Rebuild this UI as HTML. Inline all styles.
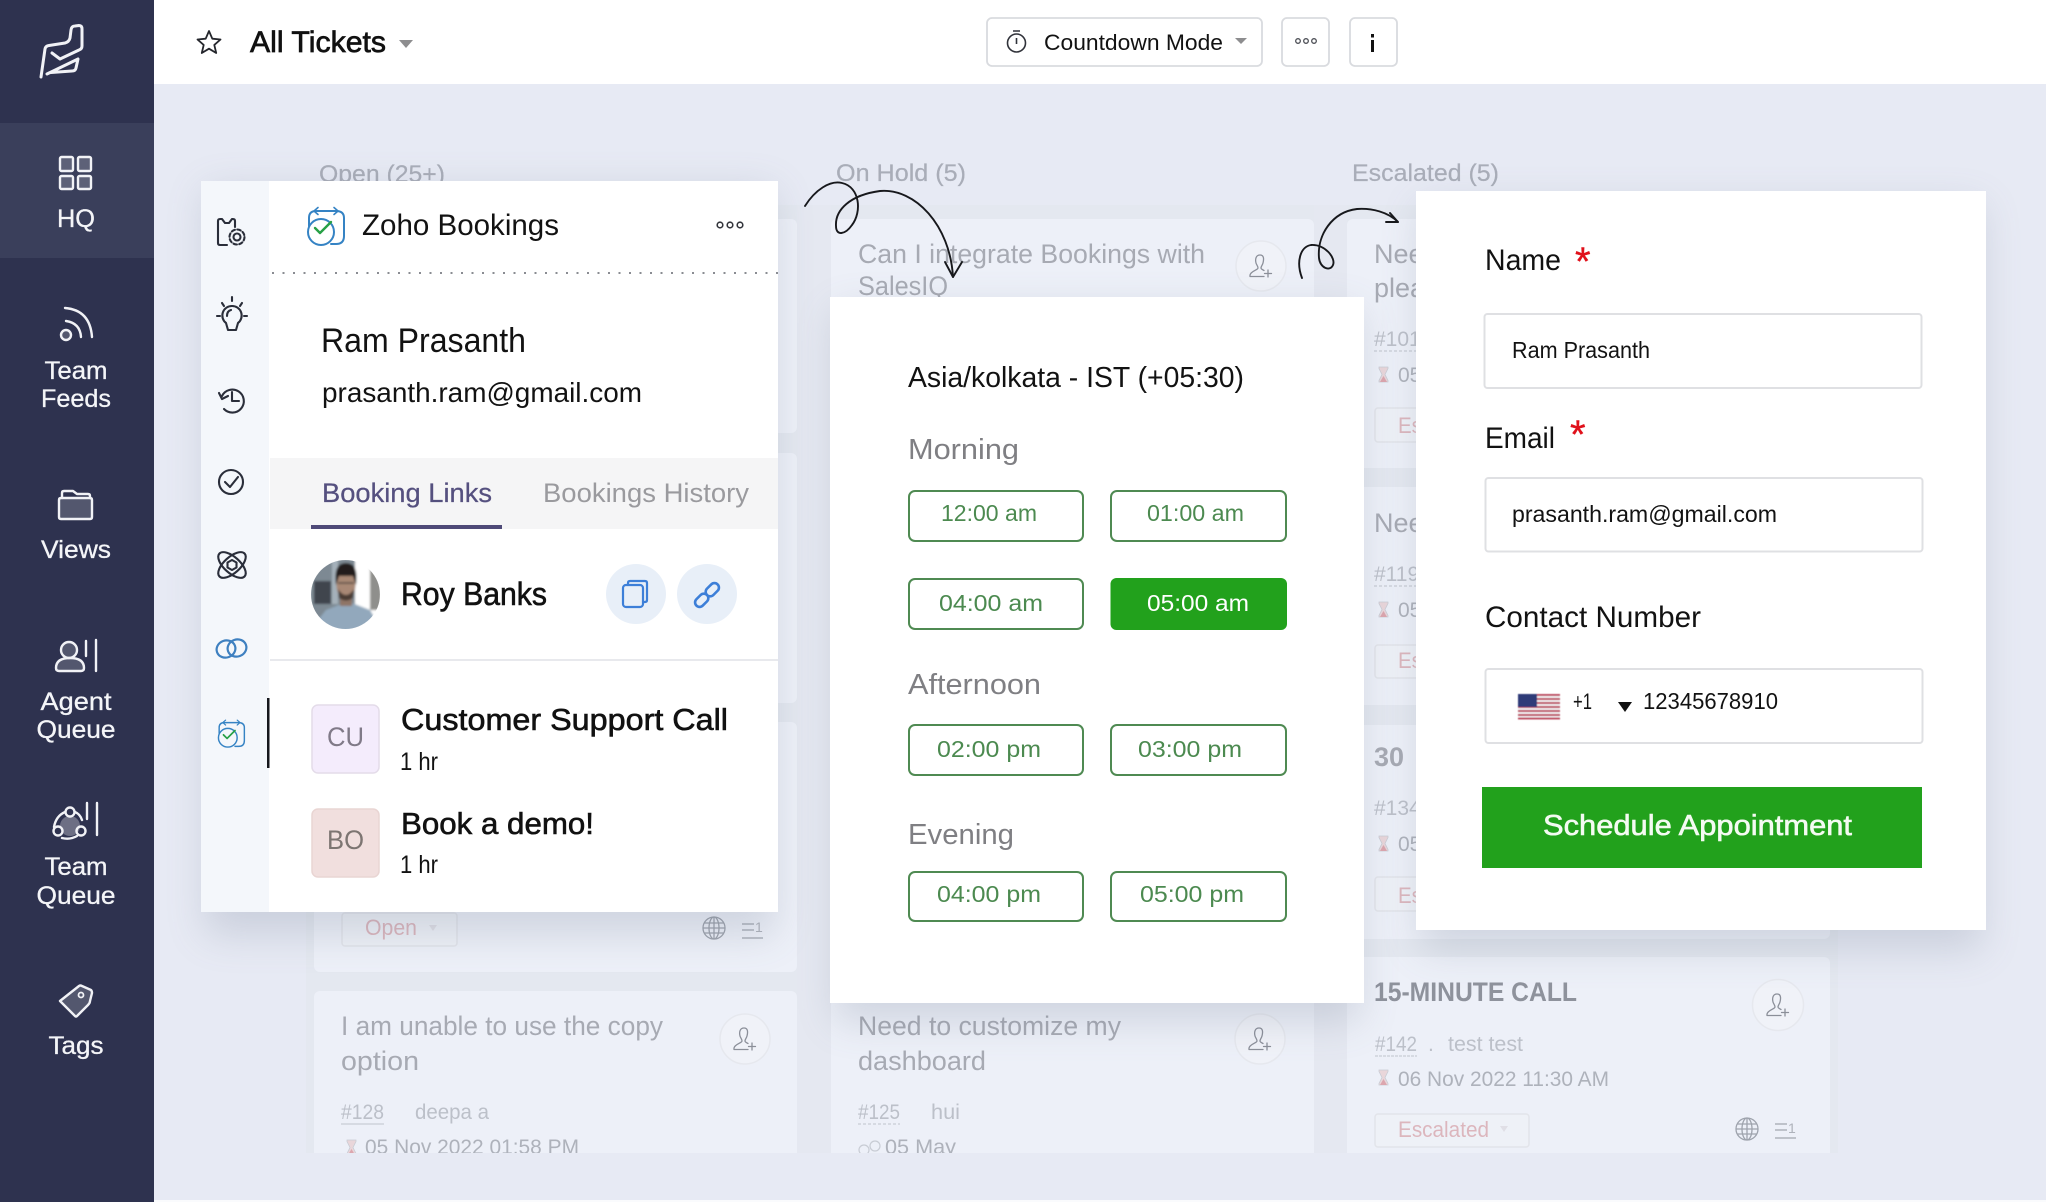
<!DOCTYPE html>
<html lang="en"><head><meta charset="utf-8"><title>All Tickets</title>
<style>
html,body{margin:0;padding:0;background:#e7eaf4;width:2046px;height:1202px;overflow:hidden}
svg{display:block}
text{font-family:"Liberation Sans",sans-serif;white-space:pre}
.side{fill:#f4f5f8;stroke:#f4f5f8;stroke-width:.3;font-size:25px;text-anchor:middle}
.si{fill:rgba(255,255,255,.18);stroke:#f1f2f6;stroke-width:2.4;stroke-linecap:round;stroke-linejoin:round}
.sl{fill:none;stroke:#f1f2f6;stroke-width:2.4;stroke-linecap:round;stroke-linejoin:round}
.ri{fill:none;stroke:#2a2e3a;stroke-width:2.1;stroke-linecap:round;stroke-linejoin:round}
.t{fill:#a7aab3;font-size:27px}
.m{fill:#bcc0c9;font-size:21px}
.m2{fill:#aeb2bb;font-size:21px}
.r{fill:#dcb6bd;font-size:22px}
.tag{fill:#eef1f7;stroke:#e2e4ea;stroke-width:1.5}
.card{fill:#edf0f8}
.lab{fill:#a9adb8;font-size:24px;stroke:#a9adb8;stroke-width:.2}
.b{fill:#111;stroke:#111;stroke-width:.6}
.k{fill:#121212}
.g{fill:#4c8a50;font-size:23px}
.slot{fill:#fff;stroke:#4f8a52;stroke-width:2}
.inp{fill:#fff;stroke:#dfe0e3;stroke-width:2}
.ic{fill:none;stroke:#3d7fd8;stroke-width:2.2;stroke-linecap:round;stroke-linejoin:round}
.hg{fill:none;stroke:#c8ccd4;stroke-width:1.2}
</style></head>
<body>
<svg xmlns="http://www.w3.org/2000/svg" width="2046" height="1202" viewBox="0 0 2046 1202">
<defs>
<clipPath id="cl"><rect x="154" y="85" width="1892" height="1068"/></clipPath>
<clipPath id="av"><circle cx="345.500" cy="594.500" r="34.500"/></clipPath>
<filter id="sh" x="-20%" y="-20%" width="140%" height="140%"><feGaussianBlur stdDeviation="20"/></filter>
<filter id="sf"><feGaussianBlur stdDeviation="1"/></filter>
<filter id="sf2"><feGaussianBlur stdDeviation=".4"/></filter>
<g id="pp"><path d="M-1 -11C-5 -11 -6 -7 -5 -3C-4.500 -1 -3 0 -3 2C-3 4 -10 5 -11 9L-11 10.500L3 10.500M-1 -11C3 -11 3 -7 2 -3C1.500 -1 0 .5 0 2C0 3 2 4 3 4.500M7 4V11M3.500 7.500H10.500" fill="none" stroke="#8b8f99" stroke-width="1.300" stroke-linecap="round" stroke-linejoin="round"/></g>
<g id="globe" fill="none" stroke="#9ea3ad" stroke-width="1.300"><circle r="11"/><ellipse rx="5" ry="11"/><path d="M0 -11V11M-10 -5H10M-11 0H11M-10 5H10"/></g>
<g id="hour"><path d="M0 0H9V1.500L6 7.500L9 13.500V15H0V13.500L3 7.500L0 1.500Z" fill="#e9d6da" stroke="#c8ccd4" stroke-width=".8"/><path d="M1 15L4.500 9L8 15Z" fill="#dca6ae"/></g>
<g id="list" fill="none" stroke="#aeb2bb" stroke-width="1.400"><path d="M0 3H12M0 9H12M0 17H21"/></g>
<g id="bk" fill="none" stroke-linecap="round" stroke-linejoin="round">
<path d="M3 20V12Q3 5 10 5H30Q38 5 38 12V30Q38 38 30 38H25" stroke="#3583c4" stroke-width="2"/>
<path d="M12 1.500L8 5L12 8.500M28 1.500L32 5L28 8.500" stroke="#3583c4" stroke-width="1.600"/>
<circle cx="15" cy="26" r="13" stroke="#3583c4" stroke-width="2"/>
<path d="M9 22L14 27L25 16" stroke="#27a046" stroke-width="2.400"/>
</g>
</defs>

<rect width="2046" height="1202" fill="#e7eaf4"/>
<rect x="154" y="1200" width="1892" height="2" fill="#fafbfd"/>

<!-- Board background -->
<g clip-path="url(#cl)">
<rect x="306" y="205" width="1532" height="960" fill="#e4e8f0"/>
<rect x="797" y="205" width="34" height="960" fill="#e5e8f1"/>
<rect x="1314" y="205" width="33" height="960" fill="#e5e8f1"/>

<!-- Open column -->
<rect class="card" x="314" y="219" width="483" height="214" rx="6"/>
<rect class="card" x="314" y="453" width="483" height="250" rx="6"/>
<rect class="card" x="314" y="722" width="483" height="250" rx="6"/>
<rect class="card" x="314" y="991" width="483" height="200" rx="6"/>
<!-- On hold column -->
<rect class="card" x="831" y="219" width="483" height="249" rx="6"/>
<rect class="card" x="831" y="991" width="483" height="200" rx="6"/>
<!-- Escalated column -->
<rect class="card" x="1347" y="219" width="483" height="249" rx="6"/>
<rect class="card" x="1347" y="487" width="483" height="218" rx="6"/>
<rect class="card" x="1347" y="725" width="483" height="214" rx="6"/>
<rect class="card" x="1347" y="957" width="483" height="220" rx="6"/>

<text class="lab" x="319" y="182" textLength="126" lengthAdjust="spacingAndGlyphs">Open (25+)</text>
<text class="lab" x="836" y="181" textLength="130" lengthAdjust="spacingAndGlyphs">On Hold (5)</text>
<text class="lab" x="1352" y="181" textLength="147" lengthAdjust="spacingAndGlyphs">Escalated (5)</text>

<!-- On hold cards -->
<text class="t" x="858" y="263" textLength="347" lengthAdjust="spacingAndGlyphs">Can I integrate Bookings with</text>
<text class="t" x="858" y="295" textLength="90" lengthAdjust="spacingAndGlyphs">SalesIQ</text>
<circle cx="1261" cy="266" r="25" fill="#f0f2f8" stroke="#e6e8ee" stroke-width="1.500"/><use href="#pp" x="1261" y="266"/>

<text class="t" x="858" y="1035" textLength="263" lengthAdjust="spacingAndGlyphs">Need to customize my</text>
<text class="t" x="858" y="1070" textLength="128" lengthAdjust="spacingAndGlyphs">dashboard</text>
<circle cx="1260" cy="1039" r="25" fill="#f0f2f8" stroke="#e6e8ee" stroke-width="1.500"/><use href="#pp" x="1260" y="1039"/>
<text class="m" x="858" y="1119" textLength="42" lengthAdjust="spacingAndGlyphs">#125</text>
<path d="M858 1124H900" stroke="#c8ccd4" stroke-width="1.200" stroke-dasharray="3 2"/>
<text class="m" x="931" y="1119" textLength="29" lengthAdjust="spacingAndGlyphs">hui</text>
<circle cx="864" cy="1150" r="5" class="hg"/><circle cx="875" cy="1146" r="5" class="hg" stroke="#e0cfa8"/>
<text class="m2" x="885" y="1154" textLength="71" lengthAdjust="spacingAndGlyphs">05 May</text>

<!-- Open cards -->
<rect class="tag" x="342" y="913" width="115" height="33" rx="3"/>
<text class="r" x="365" y="935" textLength="52" lengthAdjust="spacingAndGlyphs">Open</text>
<path d="M429 925H437L433 931Z" fill="#e0dfe6"/>
<use href="#globe" x="714" y="928"/>
<use href="#list" x="742" y="921"/>
<text x="755" y="932" font-size="14" fill="#aeb2bb">1</text>

<text class="t" x="341" y="1035" textLength="322" lengthAdjust="spacingAndGlyphs">I am unable to use the copy</text>
<text class="t" x="341" y="1070" textLength="78" lengthAdjust="spacingAndGlyphs">option</text>
<circle cx="745" cy="1039" r="25" fill="#f0f2f8" stroke="#e6e8ee" stroke-width="1.500"/><use href="#pp" x="745" y="1039"/>
<text class="m" x="341" y="1119" textLength="43" lengthAdjust="spacingAndGlyphs">#128</text>
<path d="M341 1124H384" stroke="#c8ccd4" stroke-width="1.200"/>
<text class="m" x="415" y="1119" textLength="74" lengthAdjust="spacingAndGlyphs">deepa a</text>
<use href="#hour" x="347" y="1140"/>
<text class="m2" x="365" y="1154" textLength="214" lengthAdjust="spacingAndGlyphs">05 Nov 2022 01:58 PM</text>

<!-- Escalated cards -->
<text class="t" x="1374" y="263">Need</text>
<text class="t" x="1374" y="297">please</text>
<text class="m" x="1374" y="346">#101</text>
<path d="M1374 351H1416" stroke="#c8ccd4" stroke-width="1.200" stroke-dasharray="3 2"/>
<use href="#hour" x="1379" y="367"/>
<text class="m2" x="1398" y="382">05 Nov</text>
<rect class="tag" x="1375" y="408" width="120" height="34" rx="3"/>
<text class="r" x="1398" y="433" textLength="90" lengthAdjust="spacingAndGlyphs">Escalated</text>

<text class="t" x="1374" y="532">Need</text>
<text class="m" x="1374" y="581">#119</text>
<path d="M1374 586H1416" stroke="#c8ccd4" stroke-width="1.200" stroke-dasharray="3 2"/>
<use href="#hour" x="1379" y="602"/>
<text class="m2" x="1398" y="617">05 Nov</text>
<rect class="tag" x="1375" y="645" width="120" height="33" rx="3"/>
<text class="r" x="1398" y="668" textLength="90" lengthAdjust="spacingAndGlyphs">Escalated</text>

<text class="t" x="1374" y="766" font-weight="700" fill="#8e929c">30</text>
<text class="m" x="1374" y="815">#134</text>
<use href="#hour" x="1379" y="836"/>
<text class="m2" x="1398" y="851">05 Nov</text>
<rect class="tag" x="1375" y="877" width="120" height="34" rx="3"/>
<text class="r" x="1398" y="903" textLength="90" lengthAdjust="spacingAndGlyphs">Escalated</text>

<text x="1374" y="1001" font-size="27" font-weight="700" fill="#8e929c" textLength="203" lengthAdjust="spacingAndGlyphs">15-MINUTE CALL</text>
<circle cx="1778" cy="1005" r="25.500" fill="#f0f2f8" stroke="#e6e8ee" stroke-width="1.500"/>
<use href="#pp" x="1778" y="1005"/>
<text class="m" x="1375" y="1051" textLength="42" lengthAdjust="spacingAndGlyphs" fill="#aeb2bc">#142</text>
<path d="M1375 1056H1417" stroke="#c8ccd4" stroke-width="1.200" stroke-dasharray="3 1"/>
<text x="1428" y="1051" font-size="21" fill="#bcc0c9">.</text>
<text class="m" x="1448" y="1051" textLength="75" lengthAdjust="spacingAndGlyphs">test test</text>
<use href="#hour" x="1379" y="1070"/>
<text class="m2" x="1398" y="1086" textLength="211" lengthAdjust="spacingAndGlyphs">06 Nov 2022 11:30 AM</text>
<rect class="tag" x="1375" y="1114" width="154" height="33" rx="3"/>
<text class="r" x="1398" y="1137" textLength="91" lengthAdjust="spacingAndGlyphs">Escalated</text>
<path d="M1500 1126H1508L1504 1132Z" fill="#e0dfe6"/>
<use href="#globe" x="1747" y="1129"/>
<use href="#list" x="1775" y="1121"/>
<text x="1788" y="1133" font-size="14" fill="#aeb2bb">1</text>

<!-- Panel shadows -->
<rect x="205" y="190" width="570" height="745" fill="#5a6880" opacity=".2" filter="url(#sh)"/>
<rect x="835" y="310" width="525" height="712" fill="#5a6880" opacity=".2" filter="url(#sh)"/>
<rect x="1420" y="205" width="562" height="745" fill="#5a6880" opacity=".2" filter="url(#sh)"/>
</g>

<!-- Header -->
<rect x="154" y="0" width="1892" height="84" fill="#fff"/>
<path d="M209 31L212.300 38.700L220.500 39.500L214.300 44.900L216.200 53L209 48.700L201.800 53L203.700 44.900L197.500 39.500L205.700 38.700Z" fill="none" stroke="#24262c" stroke-width="1.800" stroke-linejoin="round"/>
<text class="b" x="250" y="52" font-size="30" textLength="136" lengthAdjust="spacingAndGlyphs" style="stroke-width:.7">All Tickets</text>
<path d="M399 40H413L406 48Z" fill="#8d8d8f"/>
<rect x="987" y="18" width="275" height="48" rx="5" fill="#fff" stroke="#d9dbdf" stroke-width="1.800"/>
<circle cx="1016.500" cy="43" r="9" fill="none" stroke="#30323a" stroke-width="1.600"/>
<path d="M1013 31H1020M1016.500 38V44" stroke="#30323a" stroke-width="1.600" fill="none"/>
<text class="k" x="1044" y="50" font-size="22" textLength="179" lengthAdjust="spacingAndGlyphs">Countdown Mode</text>
<path d="M1235 38H1247L1241 44Z" fill="#8d8d8f"/>
<rect x="1282" y="18" width="47" height="48" rx="5" fill="#fff" stroke="#d9dbdf" stroke-width="1.800"/>
<g fill="none" stroke="#4c4e55" stroke-width="1.300"><circle cx="1298" cy="41" r="2.300"/><circle cx="1306" cy="41" r="2.300"/><circle cx="1314" cy="41" r="2.300"/></g>
<rect x="1350" y="18" width="47" height="48" rx="5" fill="#fff" stroke="#d9dbdf" stroke-width="1.800"/>
<rect x="1371" y="34" width="3" height="3.500" fill="#111"/><rect x="1371" y="40" width="3" height="12" fill="#111"/>

<!-- Sidebar -->
<rect width="154" height="1202" fill="#2e324f"/>
<rect y="123" width="154" height="135" fill="#3a3f5b"/>
<path d="M41 77L45 49Q45.500 46 49 45.500L65 43Q69 42 70 38L71 30Q71.500 26 75 26L79 25.500Q82 25.500 82 29L82 46Q82 49 79 50L60 59L52 53M78 59L76 68Q75.500 71 72 71L51 72.500Q49 72.500 47 74Z" fill="none" stroke="#f1f2f6" stroke-width="3" stroke-linejoin="round" stroke-linecap="round"/>

<rect class="si" x="60" y="157" width="13" height="14" rx="1.500"/><rect class="si" x="78" y="157" width="13" height="14" rx="1.500"/>
<rect class="si" x="60" y="176" width="13" height="13" rx="1.500"/><rect class="si" x="78" y="176" width="13" height="13" rx="1.500"/>
<text class="side" x="76" y="227" font-size="26" textLength="38" lengthAdjust="spacingAndGlyphs">HQ</text>

<circle class="si" cx="66" cy="335" r="5"/>
<path class="sl" d="M66 321Q80 323 81 337M65 308Q90 310 92 337"/>
<text class="side" x="76" y="379" textLength="63" lengthAdjust="spacingAndGlyphs">Team</text>
<text class="side" x="76" y="407" textLength="70" lengthAdjust="spacingAndGlyphs">Feeds</text>

<path class="sl" d="M62 498V493Q62 491 64 491H73L77 494H88Q90 494 90 496V498"/>
<path class="si" d="M59 500Q59 498 61 498H90Q92 498 92 500V517Q92 519 90 519H61Q59 519 59 517Z"/>
<text class="side" x="76" y="558" textLength="70" lengthAdjust="spacingAndGlyphs">Views</text>

<circle class="si" cx="69" cy="650" r="8"/>
<path class="si" d="M56 668Q56 658 70 658Q84 658 84 668Q84 671 81 671H59Q56 671 56 668Z"/>
<path class="sl" d="M86 641V656M96 640V671"/>
<text class="side" x="76" y="710" textLength="71" lengthAdjust="spacingAndGlyphs">Agent</text>
<text class="side" x="76" y="738" textLength="79" lengthAdjust="spacingAndGlyphs">Queue</text>

<circle cx="70" cy="826" r="10" fill="rgba(255,255,255,.3)"/>
<circle class="sl" cx="70" cy="812" r="4.500"/><circle class="sl" cx="58" cy="831" r="4.500"/><circle class="sl" cx="81" cy="831" r="4.500"/>
<path class="sl" d="M65 812Q56 816 54 827M62 838Q70 840 77 836M75 812Q80 814 82 820"/>
<path class="sl" d="M87 803V819M97 803V835"/>
<text class="side" x="76" y="875" textLength="63" lengthAdjust="spacingAndGlyphs">Team</text>
<text class="side" x="76" y="904" textLength="79" lengthAdjust="spacingAndGlyphs">Queue</text>

<path class="si" d="M60 1001L79 986Q80 985 82 986L91 990Q92 991 92 993L90 1001Q90 1003 88 1005L77 1016Q76 1017 75 1016Z"/>
<circle cx="81" cy="995" r="2.500" fill="none" stroke="#f1f2f6" stroke-width="1.800"/>
<text class="side" x="76" y="1054" textLength="55" lengthAdjust="spacingAndGlyphs">Tags</text>

<!-- Panel 1 -->
<rect x="201" y="181" width="577" height="731" fill="#fff"/>
<rect x="201" y="181" width="68" height="731" fill="#f4f7fb"/>
<rect x="267" y="698" width="2.500" height="70" fill="#15171c"/>
<!-- rail icons -->
<path class="ri" d="M227 245H220Q218 245 218 243V221Q218 219 220 219H222L225 223H229L232 219H233Q235 219 235 221V227"/>
<circle class="ri" cx="237" cy="237" r="3.500"/><circle class="ri" cx="237" cy="237" r="7.500" stroke-dasharray="3.500 2.400" stroke-width="2.400"/>
<path class="ri" d="M232 306A9.500 9.500 0 0 1 238 323L236 330H228L226 323A9.500 9.500 0 0 1 232 306ZM227 316Q227 311 231 310M232 297V301M217 316H220M244 316H247M222 303L224 306M242 303L240 306" fill="#eef0f5"/>
<path class="ri" d="M222 396A11.500 11.500 0 1 1 224 409M232 392V401H239M219 393L222 399L228 396"/>
<circle class="ri" cx="231" cy="482" r="12"/><path class="ri" d="M225 482L230 487L238 477"/>
<g class="ri" transform="translate(232 565)"><ellipse rx="17" ry="8" transform="rotate(42)"/><ellipse rx="17" ry="8" transform="rotate(-42)"/><path d="M0 -5L4.500 -2.500V2.500L0 5L-4.500 2.500V-2.500Z"/></g>
<g fill="none" stroke="#3e80c0" stroke-width="2.200"><ellipse cx="226" cy="649" rx="9.500" ry="8.500" transform="rotate(-20 226 649)"/><ellipse cx="237" cy="648" rx="9.500" ry="8.500" transform="rotate(-20 237 648)"/></g>
<use href="#bk" transform="translate(217 719) scale(.72)"/>

<use href="#bk" x="306" y="206"/>
<text class="k" x="362" y="235" font-size="30" textLength="197" lengthAdjust="spacingAndGlyphs">Zoho Bookings</text>
<g fill="none" stroke="#34363d" stroke-width="1.600"><circle cx="720" cy="225" r="2.800"/><circle cx="730" cy="225" r="2.800"/><circle cx="740" cy="225" r="2.800"/></g>
<path d="M272 273H778" stroke="#8a8c92" stroke-width="2" stroke-dasharray="2 8.500"/>

<text class="k" x="321" y="352" font-size="34" textLength="205" lengthAdjust="spacingAndGlyphs">Ram Prasanth</text>
<text class="k" x="322" y="402" font-size="28" textLength="320" lengthAdjust="spacingAndGlyphs">prasanth.ram@gmail.com</text>

<rect x="270" y="458" width="508" height="71" fill="#f5f5f6"/>
<text x="322" y="502" font-size="27" fill="#55507f" stroke="#55507f" stroke-width=".25" textLength="170" lengthAdjust="spacingAndGlyphs">Booking Links</text>
<rect x="311" y="525" width="191" height="4" fill="#4f4a78"/>
<text x="543" y="502" font-size="27" fill="#9a9a9e" textLength="206" lengthAdjust="spacingAndGlyphs">Bookings History</text>

<!-- Avatar -->
<g clip-path="url(#av)"><g filter="url(#sf)">
<rect x="310" y="559" width="72" height="72" fill="#fff"/>
<rect x="310" y="559" width="45" height="72" fill="#7d8993"/>
<rect x="332" y="559" width="6" height="45" fill="#a5b1ba"/>
<rect x="314" y="581" width="17" height="23" fill="#3f454d"/>
<rect x="370" y="565" width="11" height="45" fill="#8f8f8c"/>
<path d="M309 631L326 610L344 603L352 603L370 610L382 631Z" fill="#92a8bc"/>
<rect x="340" y="596" width="12" height="10" fill="#8f7466"/>
<ellipse cx="346" cy="585" rx="9.500" ry="14" fill="#a88875"/>
<path d="M336 585Q333 563 346 563Q359 563 356 585L353 576H339Z" fill="#211c1a"/>
<path d="M338 589Q346 601 354 589L353 598Q346 603 339 598Z" fill="#4b3c35"/>
<path d="M338 583H354" stroke="#3f3733" stroke-width="1.300"/>
</g></g>
<text class="b" x="401" y="605" font-size="32" textLength="146" lengthAdjust="spacingAndGlyphs">Roy Banks</text>
<circle cx="636" cy="594" r="30" fill="#e8eff8"/>
<circle cx="707" cy="594" r="30" fill="#e8eff8"/>
<path class="ic" d="M628 585V583Q628 581 630 581H645Q647 581 647 583V600Q647 602 645 602H643"/>
<rect class="ic" x="623" y="585" width="20" height="22" rx="3" fill="#e8eff8"/>
<g class="ic" transform="translate(707 595) rotate(-45)" style="stroke-width:2.600"><rect x="-15" y="-4.500" width="15" height="9" rx="4.500"/><rect x="0" y="-4.500" width="15" height="9" rx="4.500"/></g>
<rect x="270" y="659" width="508" height="2" fill="#e8e9ed"/>

<rect x="312" y="705" width="67" height="68" rx="6" fill="#f4ecfc" stroke="#e4dce9" stroke-width="1.500"/>
<text x="345.500" y="746" font-size="27" fill="#807a88" text-anchor="middle" textLength="37" lengthAdjust="spacingAndGlyphs">CU</text>
<rect x="312" y="809" width="67" height="68" rx="6" fill="#f1dfde" stroke="#e9d5d3" stroke-width="1.500"/>
<text x="345.500" y="849" font-size="27" fill="#7d7572" text-anchor="middle" textLength="37" lengthAdjust="spacingAndGlyphs">BO</text>
<text class="b" x="401" y="730" font-size="31" textLength="327" lengthAdjust="spacingAndGlyphs">Customer Support Call</text>
<text class="k" x="400" y="770" font-size="25" textLength="38" lengthAdjust="spacingAndGlyphs">1 hr</text>
<text class="b" x="401" y="834" font-size="31" textLength="193" lengthAdjust="spacingAndGlyphs">Book a demo!</text>
<text class="k" x="400" y="873" font-size="25" textLength="38" lengthAdjust="spacingAndGlyphs">1 hr</text>

<!-- Panel 2 -->
<rect x="830" y="297" width="534" height="706" fill="#fff"/>
<text class="k" x="908" y="387" font-size="29" textLength="336" lengthAdjust="spacingAndGlyphs">Asia/kolkata - IST (+05:30)</text>
<text x="908" y="459" font-size="29" fill="#7f7f83" textLength="111" lengthAdjust="spacingAndGlyphs">Morning</text>
<text x="908" y="694" font-size="29" fill="#7f7f83" textLength="133" lengthAdjust="spacingAndGlyphs">Afternoon</text>
<text x="908" y="844" font-size="29" fill="#7f7f83" textLength="106" lengthAdjust="spacingAndGlyphs">Evening</text>

<rect class="slot" x="909" y="491" width="174" height="50" rx="6"/>
<rect class="slot" x="1111" y="491" width="175" height="50" rx="6"/>
<rect class="slot" x="909" y="579" width="174" height="50" rx="6"/>
<rect x="1110.500" y="578" width="176.500" height="52" rx="6" fill="#22a11c"/>
<rect class="slot" x="909" y="725" width="174" height="50" rx="6"/>
<rect class="slot" x="1111" y="725" width="175" height="50" rx="6"/>
<rect class="slot" x="909" y="872" width="174" height="49" rx="6"/>
<rect class="slot" x="1111" y="872" width="175" height="49" rx="6"/>
<text class="g" x="941" y="521" textLength="96" lengthAdjust="spacingAndGlyphs">12:00 am</text>
<text class="g" x="1147" y="521" textLength="97" lengthAdjust="spacingAndGlyphs">01:00 am</text>
<text class="g" x="939" y="611" textLength="104" lengthAdjust="spacingAndGlyphs">04:00 am</text>
<text x="1147" y="611" font-size="23" fill="#fff" textLength="102" lengthAdjust="spacingAndGlyphs">05:00 am</text>
<text class="g" x="937" y="757" textLength="104" lengthAdjust="spacingAndGlyphs">02:00 pm</text>
<text class="g" x="1138" y="757" textLength="104" lengthAdjust="spacingAndGlyphs">03:00 pm</text>
<text class="g" x="937" y="902" textLength="104" lengthAdjust="spacingAndGlyphs">04:00 pm</text>
<text class="g" x="1140" y="902" textLength="104" lengthAdjust="spacingAndGlyphs">05:00 pm</text>

<!-- Panel 3 -->
<rect x="1416" y="191" width="570" height="739" fill="#fff"/>
<text class="k" x="1485" y="270" font-size="30" textLength="76" lengthAdjust="spacingAndGlyphs">Name</text>
<text x="1575" y="275" font-size="40" fill="#e0101a" stroke="#e0101a" stroke-width=".4">*</text>
<rect class="inp" x="1484.500" y="314" width="437" height="74" rx="3"/>
<text class="k" x="1512" y="358" font-size="23" textLength="138" lengthAdjust="spacingAndGlyphs">Ram Prasanth</text>
<text class="k" x="1485" y="448" font-size="30" textLength="70" lengthAdjust="spacingAndGlyphs">Email</text>
<text x="1570" y="448" font-size="40" fill="#e0101a" stroke="#e0101a" stroke-width=".4">*</text>
<rect class="inp" x="1485.500" y="478" width="437" height="73.500" rx="3"/>
<text class="k" x="1512" y="522" font-size="23" textLength="265" lengthAdjust="spacingAndGlyphs">prasanth.ram@gmail.com</text>
<text class="k" x="1485" y="627" font-size="30" textLength="216" lengthAdjust="spacingAndGlyphs">Contact Number</text>
<rect class="inp" x="1485.500" y="669" width="437" height="74" rx="3"/>
<g filter="url(#sf2)">
<rect x="1518" y="694" width="42" height="25" fill="#f2eef0"/>
<path d="M1518 695H1560M1518 699H1560M1518 703H1560M1518 707H1560M1518 711H1560M1518 715H1560M1518 718.500H1560" stroke="#b6354e" stroke-width="1.800"/>
<rect x="1518" y="694" width="19" height="13" fill="#2e3a78"/>
</g>
<text class="k" x="1573" y="709" font-size="22" textLength="19" lengthAdjust="spacingAndGlyphs">+1</text>
<path d="M1618 702H1632L1625 712Z" fill="#111"/>
<text class="k" x="1643" y="709" font-size="23" textLength="135" lengthAdjust="spacingAndGlyphs">12345678910</text>
<rect x="1482" y="787" width="440" height="81" fill="#22a11c"/>
<text x="1543" y="835" font-size="29" fill="#f4fbf2" stroke="#f4fbf2" stroke-width=".6" textLength="309" lengthAdjust="spacingAndGlyphs">Schedule Appointment</text>

<!-- Arrows -->
<g fill="none" stroke="#17181c" stroke-width="1.900" stroke-linecap="round" stroke-linejoin="round">
<path d="M805 206C815 190 830 180 842 183C860 187 862 212 852 225C845 235 836 236 836 226C835 210 850 195 880 191C915 188 950 225 953 277"/>
<path d="M945 262L953 277L962 262"/>
<path d="M1302 278C1296 262 1300 247 1311 245C1325 244 1336 258 1333 265C1330 272 1320 268 1319 258C1317 235 1332 212 1357 209C1372 208 1388 212 1398 222"/>
<path d="M1390 213L1398 222L1386 222"/>
</g>
</svg>
</body></html>
